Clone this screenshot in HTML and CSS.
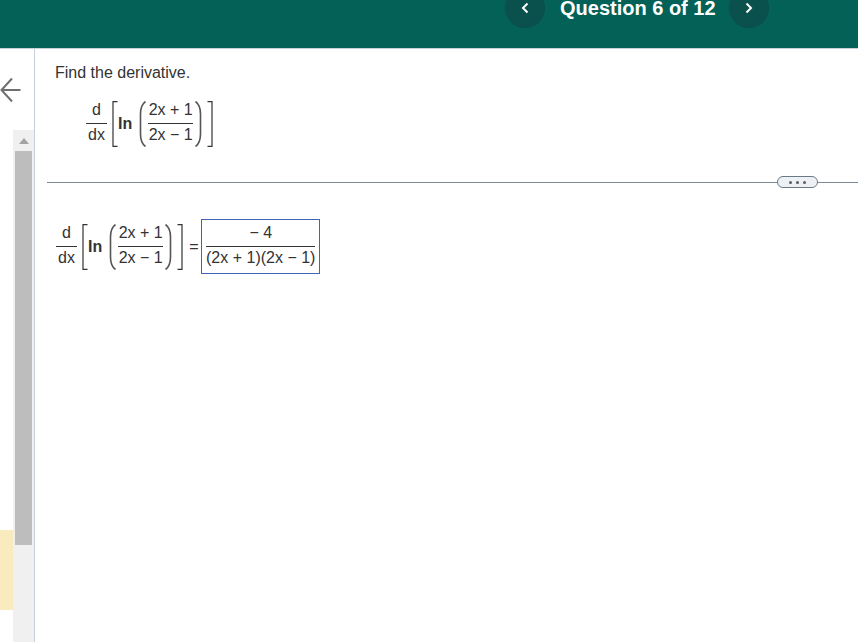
FILE: index.html
```html
<!DOCTYPE html>
<html lang="en">
<head>
<meta charset="utf-8">
<title>Question 6 of 12</title>
<link rel="stylesheet" href="styles.css">
</head>
<body>
<header class="top">
  <button class="nav" aria-label="Previous"><svg width="8" height="12" viewBox="0 0 8 12"><path d="M6.500 1.500 2 6l4.500 4.500" fill="none" stroke="#fff" stroke-width="2"/></svg></button>
  <h1 class="title">Question 6 of 12</h1>
  <button class="nav" aria-label="Next"><svg width="8" height="12" viewBox="0 0 8 12"><path d="M1.500 1.500 6 6l-4.500 4.500" fill="none" stroke="#fff" stroke-width="2"/></svg></button>
</header>
<div class="body">
  <aside class="side">
    <div class="rail">
      <svg class="back" width="21" height="26" viewBox="0 0 21 26"><path d="M20.500 13H1.500M12 1.500 1.500 13 12 24.500" fill="none" stroke="#6f7070" stroke-width="2"/></svg>
      <div class="flag"></div>
    </div>
    <div class="scroll">
      <div class="scroll-up"><svg width="12" height="6" viewBox="0 0 12 6"><path d="M6 0 11 6H1Z" fill="#a3a3a3"/></svg></div>
      <div class="thumb"></div>
    </div>
  </aside>
  <main class="main">
    <p class="prompt">Find the derivative.</p>
    <div class="math given">
      <span class="frac ddx"><span class="num">d</span><span class="den">dx</span></span>
      <svg class="br" width="6" height="46" viewBox="0 0 6 46"><path d="M5.500 .6H1V45.400H5.500" fill="none" stroke="#333" stroke-width="1.200"/></svg>
      <b class="ln">In</b>
      <svg class="par" width="7" height="46" viewBox="0 0 7 46"><path d="M6.500 .5C3 3 1.500 7 1.500 13V33c0 6 1.500 10 5 12.500" fill="none" stroke="#555" stroke-width="1.600"/></svg>
      <span class="frac inner"><span class="num">2x + 1</span><span class="den">2x − 1</span></span>
      <svg class="par" width="7" height="46" viewBox="0 0 7 46"><path d="M.5 .5C4 3 5.500 7 5.500 13V33c0 6-1.500 10-5 12.500" fill="none" stroke="#555" stroke-width="1.600"/></svg>
      <svg class="br right" width="6" height="46" viewBox="0 0 6 46"><path d="M.5 .6H5V45.400H.5" fill="none" stroke="#333" stroke-width="1.200"/></svg>
    </div>
    <div class="divider"><span class="more"><i></i><i></i><i></i></span></div>
    <div class="math answer">
      <span class="frac ddx"><span class="num">d</span><span class="den">dx</span></span>
      <svg class="br" width="6" height="46" viewBox="0 0 6 46"><path d="M5.500 .6H1V45.400H5.500" fill="none" stroke="#333" stroke-width="1.200"/></svg>
      <b class="ln">In</b>
      <svg class="par" width="7" height="46" viewBox="0 0 7 46"><path d="M6.500 .5C3 3 1.500 7 1.500 13V33c0 6 1.500 10 5 12.500" fill="none" stroke="#555" stroke-width="1.600"/></svg>
      <span class="frac inner"><span class="num">2x + 1</span><span class="den">2x − 1</span></span>
      <svg class="par" width="7" height="46" viewBox="0 0 7 46"><path d="M.5 .5C4 3 5.500 7 5.500 13V33c0 6-1.500 10-5 12.500" fill="none" stroke="#555" stroke-width="1.600"/></svg>
      <svg class="br right" width="6" height="46" viewBox="0 0 6 46"><path d="M.5 .6H5V45.400H.5" fill="none" stroke="#333" stroke-width="1.200"/></svg>
      <span class="eq">=</span>
      <span class="box"><span class="frac result"><span class="num">− 4</span><span class="den">(2x + 1)(2x − 1)</span></span></span>
    </div>
  </main>
</div>
</body>
</html>
```
FILE: styles.css
```css
* { box-sizing: border-box; }
html, body { margin: 0; height: 100%; overflow: hidden; }
body {
  width: 858px;
  height: 642px;
  display: flex;
  flex-direction: column;
  font-family: "Liberation Sans", Arial, sans-serif;
  color: #333;
  background: #fff;
}
.top {
  height: 49px;
  flex: none;
  background: #036157;
  border-bottom: 1px solid #c9d2d8;
  display: flex;
  align-items: flex-start;
  padding-left: 505px;
}
.nav {
  width: 40px;
  height: 40px;
  margin-top: -12px;
  padding: 0;
  border: 0;
  border-radius: 50%;
  background: #0a504d;
  display: flex;
  align-items: center;
  justify-content: center;
  flex: none;
}
.title {
  margin: -4px 13px 0 15px;
  width: 156px;
  font-size: 20px;
  line-height: 24px;
  font-weight: 700;
  color: #fff;
  white-space: nowrap;
}
.body { flex: 1; display: flex; min-height: 0; }
.side {
  width: 35px;
  flex: none;
  display: flex;
  border-right: 1px solid #c7d0e0;
}
.rail { width: 13px; flex: none; }
.back { display: block; margin-top: 28px; }
.flag { height: 80px; margin-top: 427px; background: #f9ebbe; }
.scroll {
  width: 21px;
  flex: none;
  margin-top: 81px;
  background: #f0f0f0;
  display: flex;
  flex-direction: column;
  align-items: center;
}
.scroll-up { height: 21px; flex: none; display: flex; align-items: center; justify-content: center; }
.thumb { width: 17px; height: 394px; background: #bdbdbd; }
.main { flex: 1; min-width: 0; }
.prompt {
  margin: 15px 0 0 20px;
  font-size: 16px;
  line-height: 18px;
  color: #333;
}
.math {
  display: flex;
  align-items: flex-start;
  font-size: 16px;
  height: 46px;
}
.given { margin: 19px 0 0 51px; }
.answer { margin: 41px 0 0 21px; }
.frac {
  display: inline-flex;
  flex-direction: column;
  align-items: center;
  line-height: 20px;
  margin-top: -1px;
  flex: none;
}
.num { padding-bottom: 3px; align-self: stretch; text-align: center; border-bottom: 1px solid #333; white-space: nowrap; }
.den { padding-top: 1px; white-space: nowrap; }
.ddx { width: 21px; margin-right: 5px; }
.ln { margin: 13px 7px 0 0; font-size: 16px; line-height: 20px; }
.inner { width: 45px; margin-left: 2px; margin-right: 2px; }
.br, .par { flex: none; display: block; }
.right { margin-left: 5px; }
.eq { margin: 13px 0 0 6px; line-height: 20px; width: 12px; }
.box {
  border: 1px solid #3f66b5;
  width: 119px;
  height: 55px;
  margin-top: -5px;
  padding-top: 4px;
  display: flex;
  align-items: flex-start;
  justify-content: center;
  flex: none;
}
.result { width: 109px; }
.divider {
  margin: 35px 0 0 12px;
  height: 1px;
  background: #7c8a97;
  position: relative;
}
.more {
  position: absolute;
  left: 730px;
  top: -6px;
  width: 41px;
  height: 12px;
  border: 1px solid #6b7a88;
  border-radius: 6px;
  background: #eef1f4;
  display: flex;
  align-items: center;
  justify-content: center;
  gap: 4px;
}
.more i { width: 3px; height: 3px; background: #55606b; border-radius: 50%; }
```
